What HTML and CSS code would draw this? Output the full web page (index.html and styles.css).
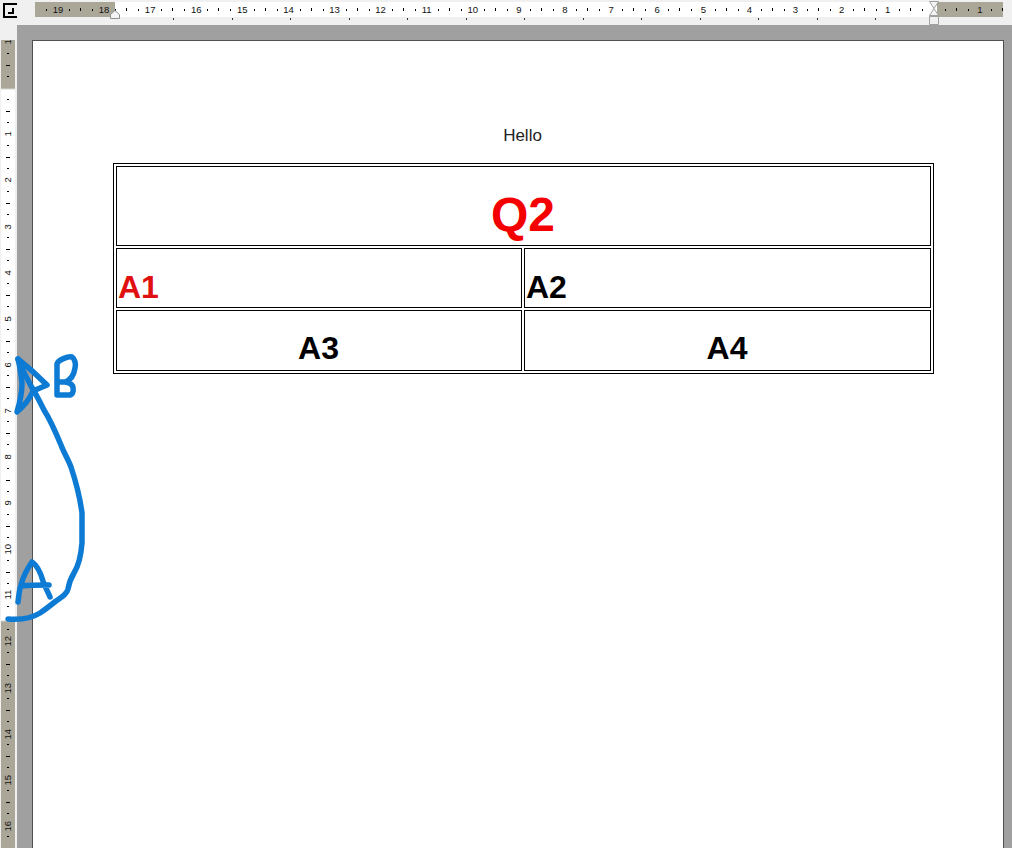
FILE: index.html
```html
<!DOCTYPE html>
<html lang="en">
<head>
    <meta charset="UTF-8">
    <title>Document</title>
    <link rel="stylesheet" href="styles.css">
</head>
<body>

<div class="window">
    <div class="corner">
        <svg width="17" height="25" viewBox="0 0 17 25">
            <path d="M17 4H4V17H17M13 8V13H8" fill="none" stroke="#000" stroke-width="2"/>
        </svg>
    </div>

    <div class="top-bar">
        <div class="h-ruler">
            <div class="h-cell"><span></span></div>
            <div class="h-cell"><span>19</span></div>
            <div class="h-cell"><span>18</span></div>
            <div class="h-cell"><span>17</span></div>
            <div class="h-cell"><span>16</span></div>
            <div class="h-cell"><span>15</span></div>
            <div class="h-cell"><span>14</span></div>
            <div class="h-cell"><span>13</span></div>
            <div class="h-cell"><span>12</span></div>
            <div class="h-cell"><span>11</span></div>
            <div class="h-cell"><span>10</span></div>
            <div class="h-cell"><span>9</span></div>
            <div class="h-cell"><span>8</span></div>
            <div class="h-cell"><span>7</span></div>
            <div class="h-cell"><span>6</span></div>
            <div class="h-cell"><span>5</span></div>
            <div class="h-cell"><span>4</span></div>
            <div class="h-cell"><span>3</span></div>
            <div class="h-cell"><span>2</span></div>
            <div class="h-cell"><span>1</span></div>
            <div class="h-cell"><span></span></div>
            <div class="h-cell"><span>1</span></div>
        </div>
        <div class="tab-stops"></div>
        <svg class="indent-left" width="10" height="9" viewBox="0 0 10 9">
            <path d="M0.5 8.5V4.5L5 0.5L9.5 4.5V8.5Z" fill="#f4f4f4" stroke="#8f8f8f"/>
        </svg>
        <svg class="indent-right" width="10" height="25" viewBox="0 0 10 25">
            <path d="M0.5 1.5H9.5L5 8.5L9.5 15.5H0.5L5 8.5Z" fill="#f4f4f4" stroke="#a0a0a0"/>
            <path d="M0.5 16.5H9.5V24.5H0.5Z" fill="#f0f0f0" stroke="#a0a0a0"/>
        </svg>
    </div>

    <div class="side-bar">
        <div class="v-ruler">
            <div class="v-cell reverse"><span>1</span></div>
            <div class="v-gap"></div>
            <div class="v-cell"><span>1</span></div>
            <div class="v-cell"><span>2</span></div>
            <div class="v-cell"><span>3</span></div>
            <div class="v-cell"><span>4</span></div>
            <div class="v-cell"><span>5</span></div>
            <div class="v-cell"><span>6</span></div>
            <div class="v-cell"><span>7</span></div>
            <div class="v-cell"><span>8</span></div>
            <div class="v-cell"><span>9</span></div>
            <div class="v-cell"><span>10</span></div>
            <div class="v-cell"><span>11</span></div>
            <div class="v-cell"><span>12</span></div>
            <div class="v-cell"><span>13</span></div>
            <div class="v-cell"><span>14</span></div>
            <div class="v-cell"><span>15</span></div>
            <div class="v-cell"><span>16</span></div>
            <div class="v-cell"><span></span></div>
        </div>
    </div>

    <div class="workspace">
        <div class="page">
            <p class="page-header">Hello</p>
            <table class="quiz">
                <colgroup>
                    <col class="col-left">
                    <col>
                </colgroup>
                <tr class="row-q">
                    <td colspan="2" class="question">Q2</td>
                </tr>
                <tr class="row-a">
                    <td class="answer correct">A1</td>
                    <td class="answer">A2</td>
                </tr>
                <tr class="row-b">
                    <td class="answer center">A3</td>
                    <td class="answer center">A4</td>
                </tr>
            </table>
        </div>
    </div>
</div>

<svg class="ink" width="1012" height="848" viewBox="0 0 1012 848">
    <!-- curve from A to B -->
    <path d="M8 619C20 620 32 618 40 613C46 609 51 605 56 601C62 597 67 594 68 589C69 583 71 578 74 573C79 565 81 555 82 543L82 513C80 498 76 482 71 467C68 459 64 453 61 445C56 433 51 421 44 410C40 402 36 394 31 386C27 378 22 370 18 359"/>
    <!-- arrow head -->
    <path d="M18 359C28 367 38 376 47 385L33 391C30 398 24 406 17 412C20 402 22 392 22 383C21 374 20 366 18 359"/>
    <!-- B -->
    <path d="M57 364V395H69C72 395 74 392 73 388C73 385 71 383 65 382L58 382M57 364C58 360 68 356 72 357C75 359 76 364 75 368C74 375 71 380 65 382"/>
    <!-- A -->
    <path d="M18 602C19 596 19 590 21 585C23 577 27 569 32 562C38 566 41 574 43 581C45 587 48 592 50 597M21 586C30 585 40 585 49 585"/>
</svg>

</body>
</html>
```

FILE: styles.css
```css
html, body {
    margin: 0;
    padding: 0;
    height: 100%;
    overflow: hidden;
    font-family: "Liberation Sans", Arial, sans-serif;
}

.window {
    display: grid;
    grid-template-columns: 17px 1fr;
    grid-template-rows: 25px 1fr;
    height: 100vh;
    background-color: #f0f0f0;
}

.corner {
    background-color: #f0f0f0;
}

.corner svg {
    display: block;
}

/* top ruler */
.top-bar {
    position: relative;
    overflow: hidden;
    padding-top: 2px;
    background-color: #f0f0f0;
}

.h-ruler {
    display: flex;
    height: 15px;
    width: 968px;
    margin-left: 18px;
    overflow: hidden;
    background: linear-gradient(90deg, #aba798 80px, #fff 80px, #fff 902px, #aba798 902px);
}

.h-cell {
    flex: none;
    display: flex;
    width: 46.1px;
    height: 15px;
    background:
        linear-gradient(#000, #000) 17px 7px / 1px 2px no-repeat,
        linear-gradient(#000, #000) 28px 6px / 1px 3px no-repeat,
        linear-gradient(#000, #000) 40px 7px / 1px 2px no-repeat;
    font-size: 9.5px;
    line-height: 15px;
    color: #111;
}

.h-cell:first-child {
    margin-left: -28.9px;
}

.h-cell span {
    display: flex;
    justify-content: center;
    width: 25%;
}

.tab-stops {
    height: 2px;
    margin: 1px 0 0 156px;
    width: 703px;
    background: repeating-linear-gradient(90deg, #333 0, #333 1px, transparent 1px, transparent 58.5px);
}

.indent-left {
    position: absolute;
    left: 93px;
    top: 10px;
}

.indent-right {
    position: absolute;
    left: 912px;
    top: 0;
}

/* left ruler */
.side-bar {
    overflow: hidden;
    background-color: #f0f0f0;
}

.v-ruler {
    width: 14px;
    height: 808px;
    margin: 15px 0 0 1px;
    overflow: hidden;
    background: linear-gradient(#aba798 48px, #fff 50px, #fff 580px, #aba798 582px);
}

.v-gap {
    height: 11.5px;
}

.v-cell {
    display: flex;
    flex-direction: column;
    justify-content: flex-end;
    align-items: center;
    height: 46.1px;
    background:
        linear-gradient(#000, #000) 6px 5px / 2px 1px no-repeat,
        linear-gradient(#000, #000) 5px 17px / 4px 1px no-repeat,
        linear-gradient(#000, #000) 6px 28px / 2px 1px no-repeat;
    font-size: 9.5px;
    line-height: 14px;
    color: #111;
}

.v-cell span {
    display: flex;
    justify-content: center;
    width: 14px;
    height: 11.5px;
    align-items: center;
    writing-mode: vertical-rl;
    transform: rotate(180deg);
}

.v-cell.reverse {
    justify-content: flex-start;
    margin-top: -3.8px;
    background:
        linear-gradient(#000, #000) 6px 17px / 2px 1px no-repeat,
        linear-gradient(#000, #000) 5px 29px / 4px 1px no-repeat,
        linear-gradient(#000, #000) 6px 40px / 2px 1px no-repeat;
}

/* page area */
.workspace {
    min-height: 0;
    overflow: hidden;
    padding: 15px 8px 0 15px;
    background-color: #a0a0a0;
}

.page {
    box-sizing: border-box;
    height: 900px;
    padding: 85px 71px 0 80px;
    border: 1px solid #505050;
    background-color: #fff;
}

.page-header {
    margin: 0 0 18px;
    text-align: center;
    font-size: 17px;
    line-height: 19px;
    color: #222;
}

.quiz {
    width: 821px;
    table-layout: fixed;
    border: 1px solid #000;
    border-spacing: 2px;
    font-weight: bold;
}

.col-left {
    width: 406px;
}

.quiz td {
    padding: 0 2px 0 1px;
    border: 1px solid #000;
    vertical-align: bottom;
}

.row-q td {
    height: 75px;
    padding-bottom: 3px;
}

.row-a td {
    height: 57px;
    padding-bottom: 1px;
}

.row-b td {
    height: 56px;
    padding-bottom: 3px;
}

.question {
    text-align: center;
    font-size: 48px;
    line-height: 55px;
    color: #f40000;
}

.answer {
    font-size: 32px;
    line-height: 37px;
    color: #000;
}

.quiz .correct {
    color: #e01010;
}

.center {
    text-align: center;
}

/* hand drawn annotation over the screenshot */
.ink {
    position: absolute;
    left: 0;
    top: 0;
    pointer-events: none;
    fill: none;
    stroke: #0d7bd4;
    stroke-width: 5.5;
    stroke-linecap: round;
    stroke-linejoin: round;
}
```
